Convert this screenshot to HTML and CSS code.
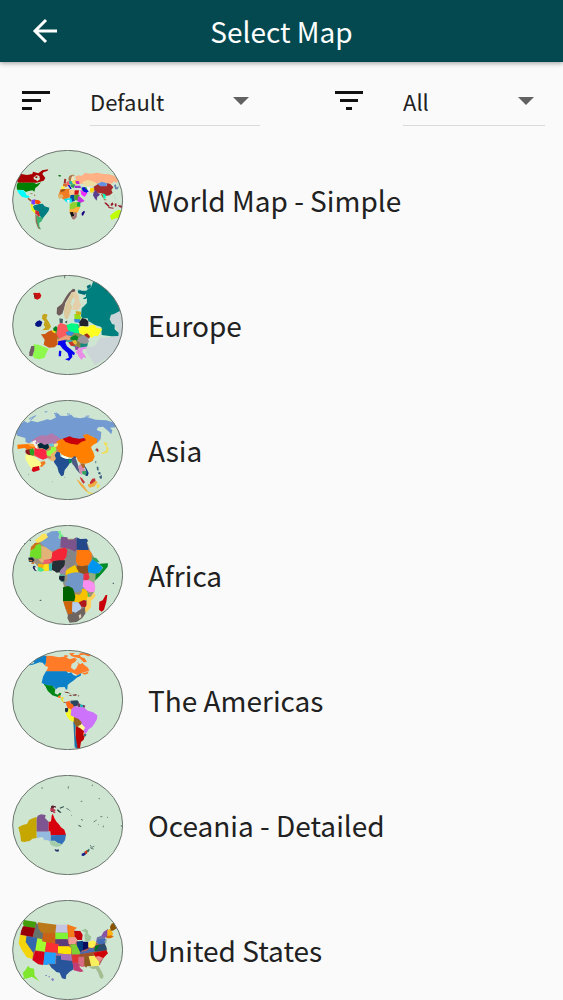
FILE: index.html
```html
<!DOCTYPE html>
<html lang="en">
<head>
    <meta charset="utf-8" />
    <meta name="viewport" content="width=device-width, initial-scale=1" />
    <title>Select Map</title>
    <link rel="stylesheet" href="styles.css">
</head>
<body>
    <header class="app-bar">
        <button class="back-button" type="button" aria-label="Back">
            <svg viewBox="0 0 28 28" width="28" height="28">
                <path d="M27 14H5M16 3L5 14L16 25" fill="none" stroke="currentColor" stroke-width="3" />
            </svg>
        </button>
        <h1 class="app-title">Select Map</h1>
    </header>
    <main>
        <form class="filters">
            <div class="filter">
                <label for="sort" aria-label="Sort">
                    <svg viewBox="0 0 28 20" width="28" height="20">
                        <path d="M0 0h28v3H0zM0 8h19v3H0zM0 16h10v3H0z" />
                    </svg>
                </label>
                <div class="select-box">
                    <select id="sort">
                        <option>Default</option>
                        <option>Name</option>
                    </select>
                </div>
            </div>
            <div class="filter">
                <label for="show" aria-label="Filter">
                    <svg viewBox="0 0 28 20" width="28" height="20">
                        <path d="M0 0h28v3H0zM5 8h18v3H5zM11 16h6v3h-6z" />
                    </svg>
                </label>
                <div class="select-box">
                    <select id="show">
                        <option>All</option>
                        <option>World</option>
                    </select>
                </div>
            </div>
        </form>
        <ul class="map-list">
            <li>
                <a href="#world">
                    <svg class="globe" viewBox="21 21 333 300">
                        <defs>
                            <clipPath id="globe-clip"><ellipse cx="188" cy="171" rx="165" ry="149" /></clipPath>
                        </defs>
                        <ellipse class="sea" cx="188" cy="171" rx="165" ry="149" />
                        <g clip-path="url(#globe-clip)">
                            <path fill="#a80000" d="M36 96L48 93L66 96L82 93L84 86L100 91L112 82L130 79L127 84L116 87L112 93L121 105L116 113L106 116L94 119L40 119L34 112Z" />
                            <path fill="#cee5d1" d="M86 103L95 96L103 99L105 109L97 115L92 110L86 109Z" />
                            <path fill="#a80000" d="M92 99L98 101L96 106L91 104Z" />
                            <path fill="#008000" d="M38 119L87 119L94 123L108 118L99 129L91 135L88 146L82 142L68 145L63 147L55 141L36 140L35 128Z" />
                            <path fill="#00ffff" d="M36 141L55 142L62 149L64 157L72 158L74 163L65 165L51 161L42 152Z" />
                            <path fill="#a0522d" d="M69 164L77 169L82 176L76 175L68 168ZM72 149L84 152L81 154ZM87 154L92 157L88 159Z" />
                            <path fill="#7a3cff" d="M80 171L91 169L90 184L79 187Z" />
                            <path fill="#ff4500" d="M90 170L102 172L108 178L102 184L91 182Z" />
                            <path fill="#e7f51c" d="M76 184L84 184L83 193L91 200L91 212L80 202Z" />
                            <path fill="#007f82" d="M88 187L103 183L113 182L119 190L133 194L131 203L124 213L117 221L111 230L106 220L101 213L100 205L88 200L84 191Z" />
                            <path fill="#d22b2b" d="M91 201L101 205L105 218L100 223L96 215L91 213Z" />
                            <path fill="#3cb371" d="M94 216L101 221L112 223L111 234L103 239L103 250L108 258L101 256L94 237Z" />
                            <path fill="#8f6d4b" d="M91 213L95 218L96 235L101 253L108 260L99 256L92 236Z" />
                            <path fill="#ffb084" d="M206 111L214 112L210 101L220 97L229 99L240 90L257 92L277 89L296 93L312 94L327 98L341 111L334 120L328 115L320 122L303 119L290 117L274 122L255 113L242 115L238 122L225 122L216 119Z" />
                            <path fill="#006400" d="M160 96L168 97L166 101L161 100Z" />
                            <path fill="#a97748" d="M190 107L193 99L201 95L210 96L200 105L197 115L192 114Z" />
                            <path fill="#ffe4b5" d="M200 103L205 96L207 109L202 114L198 112Z" />
                            <path fill="#a52a2a" d="M178 107L184 108L182 122L176 121Z" />
                            <path fill="#ff5f5f" d="M184 117L192 114L194 126L185 129Z" />
                            <path fill="#20b2aa" d="M192 115L202 114L204 123L193 123Z" />
                            <path fill="#f2e34c" d="M199 113L216 112L223 120L217 125L204 122Z" />
                            <path fill="#c020d0" d="M211 113L222 115L224 124L213 122Z" />
                            <path fill="#d87030" d="M174 122L186 122L185 132L174 131Z" />
                            <path fill="#fff04c" d="M168 130L180 130L178 139L169 138Z" />
                            <path fill="#0000cd" d="M188 126L194 127L200 137L196 138Z" />
                            <path fill="#30a050" d="M196 124L211 124L206 135L198 132Z" />
                            <path fill="#9932cc" d="M207 128L226 128L228 135L210 135Z" />
                            <path fill="#efdda0" d="M232 117L247 111L262 114L275 121L265 130L247 129L237 130Z" />
                            <path fill="#668fe0" d="M276 123L291 116L306 121L304 132L284 131Z" />
                            <path fill="#a52a2a" d="M266 131L278 124L286 130L305 130L307 120L317 124L325 133L319 141L323 149L314 157L301 159L290 151L276 149L268 143Z" />
                            <path fill="#30a050" d="M229 134L243 132L251 136L247 144L231 143Z" />
                            <path fill="#0d0ddc" d="M230 134L238 132L243 139L252 144L244 150L235 146Z" />
                            <path fill="#f4f4f4" d="M244 132L257 133L256 141L249 143Z" />
                            <path fill="#eb30ff" d="M226 140L237 147L247 151L239 162L229 155Z" />
                            <path fill="#ffd400" d="M255 136L268 135L265 148L256 149Z" />
                            <path fill="#5c4090" d="M266 147L273 142L277 149L285 153L282 158L277 161L275 173L269 166L264 157Z" />
                            <path fill="#ef7c22" d="M166 139L193 137L200 147L195 162L178 171L160 158Z" />
                            <path fill="#e1b26b" d="M159 155L171 153L176 162L164 168L160 163Z" />
                            <path fill="#8d4d1f" d="M168 140L181 138L178 144L167 147Z" />
                            <path fill="#ffca8b" d="M192 141L208 141L208 157L194 158Z" />
                            <path fill="#d01010" d="M209 142L222 142L220 155L208 155Z" />
                            <path fill="#0050a0" d="M197 156L207 155L210 173L199 178L194 167Z" />
                            <path fill="#4f9b2c" d="M207 156L224 155L220 173L209 171Z" />
                            <path fill="#00e5f2" d="M177 167L199 166L202 178L188 179L180 174Z" />
                            <path fill="#f4f4f4" d="M186 171L194 170L193 180L187 178Z" />
                            <path fill="#c92ee5" d="M220 160L227 163L239 174L226 180L217 174Z" />
                            <path fill="#8fd12e" d="M194 183L203 178L219 177L224 188L214 201L194 199Z" />
                            <path fill="#00ac4b" d="M217 178L226 177L226 191L216 191Z" />
                            <path fill="#ffb13b" d="M193 199L205 198L216 191L226 192L217 210L202 213L194 209Z" />
                            <path fill="#111" d="M194 208L204 207L208 218L200 223Z" />
                            <path fill="#a47773" d="M206 207L216 209L215 223L207 230L201 227L200 221L208 218Z" />
                            <path fill="#17007d" d="M230 210L237 203L240 206L234 218L230 217Z" />
                            <path fill="#00ffc0" d="M293 151L302 155L302 166L296 168Z" />
                            <path fill="#9b5b25" d="M286 151L294 156L296 168L307 171L298 172Z" />
                            <path fill="#9b1c2a" d="M298 178L304 179L315 190L310 191L300 182ZM317 182L324 178L325 186L318 189ZM310 192L326 194L325 197L310 195ZM329 182L334 181L335 190L330 191ZM338 186L352 188L354 197L342 191Z" />
                            <path fill="#607fb0" d="M325 153L330 164L335 173M327 127L332 124L335 134L342 129L338 139L331 139Z" />
                            <path fill="#bfff00" d="M315 218L324 210L333 204L341 200L348 202L354 213L350 229L334 225L319 231Z" />
                        </g>
                        <ellipse class="rim" cx="188" cy="171" rx="165" ry="149" />
                    </svg>
                    <span>World Map - Simple</span>
                </a>
            </li>
            <li>
                <a href="#europe">
                    <svg class="globe" viewBox="21 21 333 300">
                        <ellipse class="sea" cx="188" cy="171" rx="165" ry="149" />
                        <g clip-path="url(#globe-clip)">
                            <path fill="#cbd5d8" d="M318 139L337 130L358 133V240L270 291L245 252L242 239L269 234L285 211L320 206L340 193L328 170L313 160Z" />
                            <path fill="#007f7f" d="M219 64L230 68L244 68L249 63L258 58L265 39L285 43L360 80V130L343 130L327 138L318 140L314 154L321 168L329 170L329 184L341 195L340 204L319 205L290 201L289 177L270 171L250 159L248 151L233 151L228 145L230 121L238 113L246 105L245 93L230 93L235 86L244 80L232 75Z" />
                            <path fill="#cee5d1" d="M219 73L234 81L241 78L243 86L234 91L239 95L245 90L246 97L238 103L228 105L224 91Z" />
                            <path fill="#006b75" d="M218 67L231 69L243 73L239 81L220 76ZM245 54L256 49L258 57L248 63Z" />
                            <path fill="#705b5b" d="M156 119L171 107L181 89L190 76L204 62L210 64L211 71L200 73L191 88L181 104L178 119L172 137L162 143L155 137Z" />
                            <path fill="#dcc99e" d="M177 123L183 104L193 86L202 73L211 72L211 83L201 94L197 108L202 117L195 136L188 153L181 153L177 140Z" />
                            <path fill="#e5cfaa" d="M202 75L211 69L221 83L223 100L229 111L220 126L203 126L204 108L210 99Z" />
                            <path fill="#cf1010" d="M84 77L88 74L95 75L104 74L109 82L106 90L97 95L87 91L90 86Z" />
                            <path fill="#93201f" d="M87 78L96 83L93 91L87 88ZM158 22L163 21L161 25Z" />
                            <path fill="#c5a31a" d="M112 141L119 137L128 140L124 151L133 164L138 176L131 185L112 187L121 178L116 171L119 160L111 152Z" />
                            <path fill="#061585" d="M91 166L96 160L104 157L112 162L108 175L99 177L91 173Z" />
                            <path fill="#8a8f56" d="M160 172L186 170L224 170L224 197L248 204L245 226L222 240L212 240L192 220L160 222L152 195Z" />
                            <path fill="#cb5913" d="M108 199L120 198L129 191L139 187L149 194L160 201L157 211L158 229L149 238L132 239L116 230L119 215Z" />
                            <path fill="#8df94c" d="M85 229L100 230L124 239L131 242L124 255L119 269L103 274L89 271L83 264L88 245Z" />
                            <path fill="#705b62" d="M79 234L88 234L88 246L82 265L73 264L73 253Z" />
                            <path fill="#008020" d="M145 180L153 174L158 180L153 194L145 190Z" />
                            <path fill="#ffe200" d="M142 187L152 190L151 195L142 192Z" />
                            <path fill="#fa5b5e" d="M158 173L166 164L180 169L190 181L187 203L179 212L163 212L155 199Z" />
                            <path fill="#48626b" d="M163 151L174 153L173 165L164 165ZM181 160L187 158L186 166L181 165Z" />
                            <path fill="#00fb85" d="M185 172L198 166L219 168L222 181L222 196L210 195L197 192L188 184Z" />
                            <path fill="#338ddf" d="M182 193L193 189L208 194L200 203L186 202ZM207 152L225 151L227 165L209 163Z" />
                            <path fill="#99dd11" d="M208 138L223 137L230 151L224 154L209 153Z" />
                            <path fill="#cfae19" d="M212 129L228 131L228 140L214 140Z" />
                            <path fill="#20232b" d="M223 163L231 150L242 153L250 160L250 174L239 176L224 173Z" />
                            <path fill="#ffff22" d="M220 181L233 174L249 177L258 171L270 172L275 180L292 182L285 195L278 205L268 203L260 210L248 203L236 202L223 195Z" />
                            <path fill="#eaa17d" d="M156 216L183 202L199 205L193 217L181 214L168 223Z" />
                            <path fill="#0606ef" d="M160 220L175 217L185 217L181 224L186 235L199 245L210 255L207 262L201 259L202 267L192 278L180 274L192 269L188 255L173 242L165 232L158 231ZM162 248L169 249L168 265L161 265Z" />
                            <path fill="#078727" d="M195 209L211 201L220 207L217 218L201 218Z" />
                            <path fill="#2dacae" d="M180 218L200 216L207 219L201 223L213 239L202 234L191 223Z" />
                            <path fill="#c6382b" d="M190 223L205 220L210 234L198 234Z" />
                            <path fill="#e9bd33" d="M201 218L213 216L217 230L207 228Z" />
                            <path fill="#99979c" d="M222 208L233 202L247 205L252 222L241 228L225 225L217 218Z" />
                            <path fill="#a82d1b" d="M237 200L246 196L255 205L252 212L242 205Z" />
                            <path fill="#8e7d3c" d="M218 219L226 225L223 237L213 232Z" />
                            <path fill="#16897d" d="M226 226L240 228L249 225L246 237L226 239Z" />
                            <path fill="#9446a8" d="M210 235L223 238L218 245L211 247Z" />
                            <path fill="#e88ee6" d="M212 253L222 241L236 237L245 235L243 243L233 244L232 253L239 260L244 271L235 268L230 276L221 266L218 258Z" />
                        </g>
                        <ellipse class="rim" cx="188" cy="171" rx="165" ry="149" />
                        <path d="M179 22V31M300 70l5-2" fill="none" stroke="#444" stroke-width="2" />
                    </svg>
                    <span>Europe</span>
                </a>
            </li>
            <li>
                <a href="#asia">
                    <svg class="globe" viewBox="21 21 333 300">
                        <ellipse class="sea" cx="188" cy="171" rx="165" ry="149" />
                        <g clip-path="url(#globe-clip)">
                            <path fill="#739bd2" d="M34 104L58 84L68 90L79 83L97 88L118 82L126 79L137 81L145 77L153 73L149 65L158 60L166 68L182 69L199 65L206 73L226 76L245 72L272 80L304 82L330 90L337 102L315 104L322 112L319 124L307 112L294 101L279 103L275 111L289 117L287 138L276 151L268 144L263 130L241 138L218 140L193 138L169 143L153 131L137 127L111 131L93 134L84 143L73 151L62 148L61 135L37 128L31 116Z" />
                            <path d="M72 78L92 68L86 74L76 82M147 62L156 60M186 62L195 64M242 70L253 69M119 57L127 56" fill="none" stroke="#739bd2" stroke-width="3" />
                            <path fill="#c98a62" d="M102 156L160 142L165 190L150 204L128 196L100 192L64 186L62 158Z" />
                            <path fill="#b279ad" d="M80 143L95 132L111 127L125 128L139 121L154 129L169 140L160 151L145 153L132 153L122 155L109 155L98 148L95 154L87 151Z" />
                            <path fill="#f6f6ed" d="M83 145L92 141L94 147L90 149L97 159L98 168L91 170L89 158L83 153Z" />
                            <path fill="#002a3c" d="M98 154L108 149L118 156L130 152L132 164L124 171L111 165L102 166Z" />
                            <path fill="#ff7f00" d="M163 141L173 137L185 147L207 151L228 147L240 139L234 125L248 124L266 133L277 139L276 149L264 156L258 162L261 170L265 177L269 191L263 204L250 210L240 212L227 211L219 204L215 193L199 194L185 192L169 184L159 172L155 163L159 154L153 147Z" />
                            <path fill="#c90008" d="M173 137L194 130L204 134L223 137L238 135L243 142L229 147L218 155L197 152L182 147Z" />
                            <path fill="#ff7900" d="M37 155L54 154L83 153L94 167L79 165L71 170L58 165L38 168Z" />
                            <path fill="#ffa642" d="M66 151L87 154L88 162L75 160Z" />
                            <path fill="#8e1822" d="M62 171L74 169L79 184L72 189L61 178Z" />
                            <path fill="#2ca320" d="M73 170L84 166L89 179L84 189L75 184Z" />
                            <path fill="#ff2743" d="M91 164L99 169L115 168L124 174L127 195L114 200L100 194L88 185L88 174Z" />
                            <path fill="#f9fb8b" d="M62 183L75 187L87 190L99 201L111 210L104 221L89 224L80 229L71 215L61 197Z" />
                            <path fill="#d70513" d="M83 223L102 219L104 231L86 237L80 233Z" />
                            <path fill="#ef7b23" d="M106 207L119 204L122 211L111 222L104 220L109 215Z" />
                            <path fill="#95ff44" d="M125 175L137 171L139 161L152 161L154 171L146 184L136 190L125 187Z" />
                            <path fill="#eeb36b" d="M136 185L149 174L157 176L157 190L150 205L133 202L139 192Z" />
                            <path fill="#66c9db" d="M129 153L143 151L150 158L138 161Z" />
                            <path fill="#f1e894" d="M146 153L160 150L157 160L148 163Z" />
                            <path fill="#224f91" d="M155 176L164 178L167 191L182 197L199 198L208 190L214 192L208 202L197 206L189 219L179 231L176 247L169 250L161 238L157 222L146 206L153 197L149 187Z" />
                            <path fill="#fafff0" d="M170 187L191 193L189 198L174 194Z" />
                            <path fill="#008d52" d="M191 198L201 201L199 211L191 209Z" />
                            <path fill="#4e5b82" d="M200 200L207 190L214 200L218 213L222 230L226 243L215 231L207 218L202 213Z" />
                            <path fill="#d38aac" d="M219 220L227 214L237 224L241 235L231 235L230 246L225 241L223 231Z" />
                            <path fill="#b26422" d="M226 211L239 212L240 224L233 225Z" />
                            <path fill="#36a05e" d="M231 235L241 233L248 238L242 247L232 243Z" />
                            <path fill="#103f82" d="M238 217L244 226L251 240L248 249L241 248L245 240Z" />
                            <path fill="#c52f38" d="M224 251L231 256L240 268L235 272L228 262ZM255 267L262 257L270 256L272 265L263 274L255 274Z" />
                            <path fill="#efad42" d="M214 258L222 263L237 278L245 290L252 296L243 295L227 278ZM249 274L260 272L272 263L278 267L269 280L254 284L249 279Z" />
                            <path fill="#efde59" d="M279 272L286 276L282 282L277 288L274 279ZM245 296L262 299L270 303L251 302ZM295 146L308 151L304 162L299 155ZM305 159L311 165L309 178L294 183L287 181L303 173Z" />
                            <path fill="#60c1bd" d="M270 168L277 169L274 174L270 173Z" />
                            <path fill="#a92a2a" d="M275 164L281 171L279 178L273 172Z" />
                            <path fill="#3c617d" d="M275 221L280 221L281 233L276 231ZM281 237L286 237L287 245L279 242ZM282 251L290 246L291 256L287 258ZM270 205L274 205L273 213Z" />
                        </g>
                        <path d="M69 245h3M141 266h2M178 253l3 1" fill="none" stroke="#679090" stroke-width="2" />
                        <ellipse class="rim" cx="188" cy="171" rx="165" ry="149" />
                    </svg>
                    <span>Asia</span>
                </a>
            </li>
            <li>
                <a href="#africa">
                    <svg class="globe" viewBox="21 21 333 300">
                        <ellipse class="sea" cx="188" cy="171" rx="165" ry="149" />
                        <g clip-path="url(#globe-clip)">
                            <path fill="#9c8f7c" d="M80 98L105 70L165 62L215 62L246 72L256 100L282 142L292 152L268 188L268 220L256 240L243 280L215 308L194 310L178 262L178 208L164 164L142 156L112 158L84 130Z" />
                            <path fill="#769ed1" d="M105 73L127 58L125 47L140 40L158 39L163 47L160 60L168 66L166 88L151 97L136 98L123 90Z" />
                            <path fill="#78ed8c" d="M158 39L168 39L169 48L177 54L169 65L162 59L163 48Z" />
                            <path fill="#ffe359" d="M90 66L103 57L112 47L123 48L129 57L113 69L97 76Z" />
                            <path fill="#c97419" d="M83 82L90 74L104 74L101 81L94 84L89 92L76 98L78 86Z" />
                            <path fill="#70de28" d="M76 99L89 91L93 82L103 77L110 86L109 121L92 122L84 117L74 118Z" />
                            <path fill="#e3b276" d="M109 83L123 88L143 103L139 123L122 127L116 135L108 133L100 124L109 120Z" />
                            <path fill="#7c548b" d="M168 56L187 58L189 66L204 65L213 58L216 92L211 102L195 94L181 91L166 88Z" />
                            <path fill="#24498b" d="M214 58L226 63L245 62L250 70L245 72L251 97L215 95Z" />
                            <path fill="#ff780b" d="M216 96L252 96L260 106L260 123L248 142L234 145L219 142L211 127L210 114L215 111Z" />
                            <path fill="#858587" d="M182 91L195 95L212 102L214 114L211 137L192 152L182 149L180 128L184 119Z" />
                            <path fill="#f52538" d="M142 103L160 93L180 89L187 95L184 117L172 131L159 129L147 128L140 133L131 137L126 128L140 121Z" />
                            <path fill="#eb616a" d="M117 126L133 123L140 131L127 139L113 138Z" />
                            <path fill="#252e36" d="M143 130L162 127L180 127L179 143L168 154L166 162L155 164L147 158L139 155Z" />
                            <path fill="#3ab8b2" d="M132 138L141 136L141 158L133 158Z" />
                            <path fill="#fae21d" d="M116 139L131 137L132 158L116 160L110 156Z" />
                            <path fill="#ffb100" d="M99 137L112 138L117 148L100 151Z" />
                            <path fill="#4ae48e" d="M98 147L110 149L119 157L108 161L98 158Z" />
                            <path fill="#14252e" d="M70 119L82 118L88 126L84 132L72 131Z" />
                            <path fill="#c66e3e" d="M72 125L83 126L81 130L73 129ZM80 133L88 132L87 138L79 138Z" />
                            <path fill="#20295b" d="M85 143L91 144L92 151L97 160L89 158L83 149Z" />
                            <path fill="#e9f2e9" d="M88 146L95 151L98 157L93 158Z" />
                            <path fill="#9f80af" d="M166 157L176 149L180 139L184 151L182 167L170 168L164 163Z" />
                            <path fill="#f5c900" d="M182 159L193 150L209 142L218 149L222 164L205 165L192 171L182 170Z" />
                            <path fill="#8a521e" d="M216 142L231 145L248 142L250 156L251 168L237 169L222 163L214 149Z" />
                            <path fill="#0095ee" d="M248 147L258 131L265 121L274 131L286 140L293 150L281 166L263 168L250 163Z" />
                            <path fill="#30a25a" d="M260 118L274 120L284 133L275 133L263 124Z" />
                            <path fill="#008c29" d="M283 137L309 136L308 146L295 162L279 179L269 189L270 168L283 165L294 149Z" />
                            <path fill="#92ad80" d="M249 171L256 164L272 168L271 187L264 192L252 187Z" />
                            <path fill="#e73142" d="M234 168L249 164L254 179L247 187L233 187Z" />
                            <path fill="#5ba99a" d="M163 171L170 167L180 171L178 193L168 191L162 183Z" />
                            <path fill="#1e2639" d="M163 174L179 174L178 190L170 190L162 183Z" />
                            <path fill="#7197c9" d="M187 169L202 164L218 163L236 169L235 186L235 205L231 217L219 222L207 222L203 210L188 206L178 197L187 187Z" />
                            <path fill="#fa8ef0" d="M235 187L253 187L265 193L271 207L268 221L254 223L242 215L233 205Z" />
                            <path fill="#f8c200" d="M207 229L224 230L231 221L230 213L241 214L249 225L248 246L236 247L222 254L207 251Z" />
                            <path fill="#49cb52" d="M247 222L254 232L253 245L249 237Z" />
                            <path fill="#006200" d="M174 208L190 204L203 211L207 220L211 236L208 249L174 250Z" />
                            <path fill="#cd640b" d="M174 250L203 250L204 256L202 267L202 288L191 291L184 277L178 260Z" />
                            <path fill="#b5ceed" d="M202 252L218 253L230 265L226 278L211 285L201 281Z" />
                            <path fill="#6e6561" d="M190 289L202 287L203 280L211 285L224 276L239 267L242 285L232 300L215 312L194 314L187 300Z" />
                            <path fill="#ae171c" d="M222 253L236 246L244 249L245 268L229 266Z" />
                            <path fill="#ffd05a" d="M246 237L257 236L268 223L272 235L258 249L258 267L249 278L241 284L240 269L245 261Z" />
                            <path fill="#e0d1bc" d="M221 292L228 288L229 298L223 302Z" />
                            <path fill="#c90009" d="M302 231L307 231L304 251L297 275L290 281L282 275L283 251L293 247Z" />
                        </g>
                        <path d="M104 247h5M323 196h4M74 67h4M58 77h2" fill="none" stroke="#36575b" stroke-width="3" />
                        <ellipse class="rim" cx="188" cy="171" rx="165" ry="149" />
                    </svg>
                    <span>Africa</span>
                </a>
            </li>
            <li>
                <a href="#americas">
                    <svg class="globe" viewBox="21 21 333 300">
                        <ellipse class="sea" cx="188" cy="171" rx="165" ry="149" />
                        <g clip-path="url(#globe-clip)">
                            <path fill="#0c80c8" d="M72 65L88 60L84 52L98 45L97 38L124 38L140 44L122 60L121 68L113 59L104 58L83 65L65 68Z" />
                            <path fill="#ff7b27" d="M142 39L161 43L179 41L195 49L208 44L216 49L210 57L200 63L198 74L208 81L214 76L220 64L217 57L229 56L237 65L249 74L253 84L239 87L229 91L217 96L205 90L193 87L170 86L123 86L130 72L120 69L123 59L124 38Z" />
                            <path fill="#ff7b27" d="M192 31L209 30L203 36L224 35L228 42L239 46L246 57L236 58L224 46L207 42L199 39ZM224 31L247 30L258 39L249 40L239 35L222 37ZM180 36L190 38L184 44L176 40ZM231 91L248 87L251 91L239 95Z" />
                            <path fill="#cee5d1" d="M204 62L210 58L215 63L211 72L203 76L199 71ZM221 52L233 58L227 64L219 60Z" />
                            <path fill="#0c80c8" d="M123 85L183 85L191 91L198 88L205 96L213 99L229 91L227 98L215 104L207 112L194 121L188 126L187 139L183 140L179 132L161 133L153 139L144 130L121 126L110 119L114 101Z" />
                            <path fill="#008617" d="M116 121L123 126L142 128L151 139L149 151L158 155L164 149L169 151L166 158L158 162L142 157L129 145L122 135Z" />
                            <path d="M119 128L126 143" fill="none" stroke="#cee5d1" stroke-width="3" />
                            <path fill="#ff721c" d="M159 159L165 157L168 164L160 165Z" />
                            <path fill="#dfdf3e" d="M167 163L176 162L174 174L180 177L175 179L168 171Z" />
                            <path fill="#793b36" d="M177 146L188 147L199 153L191 151L182 149ZM174 177L184 178L181 181ZM190 157L199 155L200 160ZM202 155L215 153L214 158L205 158ZM218 156L223 158L221 161Z" />
                            <path fill="#ff671b" d="M183 177L193 173L197 181L208 184L209 195L198 202L189 196L184 187Z" />
                            <path fill="#2a455f" d="M196 173L217 172L222 178L217 189L207 191L203 184L197 181Z" />
                            <path fill="#6a3e58" d="M218 179L227 183L224 194L218 191ZM234 185L241 188L238 195L233 193Z" />
                            <path fill="#00abb2" d="M226 184L234 186L232 194L226 193Z" />
                            <path fill="#1e2d43" d="M180 196L188 194L191 201L186 210L180 205Z" />
                            <path fill="#f3f72c" d="M181 210L188 207L191 196L203 202L200 212L212 221L207 238L194 231L186 221Z" />
                            <path fill="#cd72fa" d="M199 199L208 190L223 192L238 194L248 203L264 208L277 217L276 228L268 242L261 252L251 259L241 274L235 265L239 252L231 246L226 235L212 224L197 217Z" />
                            <path fill="#956220" d="M207 222L221 228L230 238L227 248L215 253L206 241Z" />
                            <path fill="#ffff8c" d="M220 249L231 244L240 255L235 262L226 257Z" />
                            <path fill="#bd0000" d="M212 250L225 255L237 265L235 274L239 280L236 290L228 297L225 315L216 317L211 287Z" />
                            <path fill="#1d74a9" d="M205 234L212 250L210 273L214 292L218 317L209 313L207 274Z" />
                            <path fill="#ff6230" d="M235 269L242 274L241 281L234 277Z" />
                            <path fill="#267d8a" d="M237 273L245 274L242 280L236 280Z" />
                        </g>
                        <ellipse class="rim" cx="188" cy="171" rx="165" ry="149" />
                    </svg>
                    <span>The Americas</span>
                </a>
            </li>
            <li>
                <a href="#oceania">
                    <svg class="globe" viewBox="21 21 333 300">
                        <ellipse class="sea" cx="188" cy="171" rx="165" ry="149" />
                        <g clip-path="url(#globe-clip)">
                            <path fill="#c6a600" d="M40 178L53 171L66 168L72 156L85 150L95 147V210L82 212L74 219L57 222L48 220L46 202Z" />
                            <path fill="#7d5590" d="M95 153L98 143L108 139L122 141L120 150L131 161V191H95Z" />
                            <path fill="#94badf" d="M95 191H136V222L128 216L119 217L112 207L96 210Z" />
                            <path fill="#d8000c" d="M131 162L138 160L140 143L143 137L149 152L155 162L161 168L168 178L178 185L183 201L137 202L136 190H131Z" />
                            <path fill="#3270ba" d="M137 202L183 200L180 217L171 229L159 225L149 218H137Z" />
                            <path fill="#a3cca9" d="M135 219L148 220L159 226L172 229L167 234L154 237L142 233L135 228Z" />
                            <path fill="#23376c" d="M149 243L154 245L161 244L162 250L156 251L150 248Z" />
                            <path fill="#101014" d="M138 118H146V131H138Z" />
                            <path fill="#b43b51" d="M136 120L148 120L152 127L148 132L153 134L147 136L141 130L136 129Z" />
                            <path fill="#ece9e5" d="M146 119L153 118L151 124L146 124Z" />
                            <path fill="#5d2432" d="M138 115L144 112L147 114L152 114L153 119L147 118L146 121L138 121Z" />
                            <path fill="#a31f2f" d="M158 126L167 133L162 132Z" />
                            <path fill="#2b4c49" d="M164 119L177 114L176 118L165 122ZM156 124L161 125L170 134L164 134L157 128ZM219 170L228 174L229 177L222 175Z" />
                            <path fill="#142391" d="M230 257L237 254L243 250L244 258L236 264L230 263Z" />
                            <path fill="#c73a1b" d="M238 251L246 246L250 248L245 258L240 257Z" />
                            <path fill="#2a6868" d="M247 246L252 242L254 246L250 253L246 251Z" />
                        </g>
                        <path d="M255 231l4 5l-3 5M260 239l8-5M258 241l8 2M109 60h5M190 55v7M262 50v4M227 100h5M281 92h4M184 121l8 4M193 127l3 2M228 154l6 3M266 162l6-4l3-2M286 146h6M306 148h3M295 173v5M280 170h2M349 171v5M198 142h2" fill="none" stroke="#64837b" stroke-width="3" />
                        <ellipse class="rim" cx="188" cy="171" rx="165" ry="149" />
                    </svg>
                    <span>Oceania - Detailed</span>
                </a>
            </li>
            <li>
                <a href="#united-states">
                    <svg class="globe" viewBox="21 21 333 300">
                        <ellipse class="sea" cx="188" cy="171" rx="165" ry="149" />
                        <g clip-path="url(#globe-clip)">
                            <path fill="#b0605a" d="M60 90L98 92L190 100L210 140L232 150L270 150L296 140L304 164L304 180L284 216L222 220L206 226L170 220L100 210L62 180L50 130Z" />
                            <path fill="#449d0b" d="M57 81L94 87L90 105L56 100L54 91Z" />
                            <path fill="#970008" d="M54 100L90 105L83 132L46 125L49 112Z" />
                            <path fill="#66736d" d="M93 90L100 95L101 105L108 116L115 120L112 138L83 133L90 108Z" />
                            <path fill="#ba781b" d="M98 88L154 95L152 124L114 121L107 116L101 106Z" />
                            <path fill="#ca6114" d="M114 121H152V152L113 148Z" />
                            <path fill="#f4d50b" d="M45 125L65 129L63 146L85 181L82 198L65 193L50 170L41 151Z" />
                            <path fill="#3367ad" d="M65 129L97 135L91 172L84 178L62 147Z" />
                            <path fill="#a2ff2f" d="M97 136L112 139L111 145L124 148L120 176L91 172Z" />
                            <path fill="#fb3033" d="M124 148L161 153L157 178L120 176Z" />
                            <path fill="#d6001b" d="M91 174L119 177L115 216L100 214L82 201L86 189Z" />
                            <path fill="#24a0fc" d="M119 177L153 180L151 213L131 212L126 216L115 215Z" />
                            <path fill="#c5c4e3" d="M154 95H187L189 119H151Z" />
                            <path fill="#80f334" d="M151 119H189V139H151Z" />
                            <path fill="#5e3c79" d="M151 139H187L193 160H161V152H151Z" />
                            <path fill="#ffe300" d="M159 160H192L199 166L198 185L159 181Z" />
                            <path fill="#aa70b5" d="M153 182L198 184L202 203L188 204L168 200V188L154 187Z" />
                            <path fill="#28549b" d="M154 188H168V200L202 204L206 229L194 236L184 246L182 259L171 256L164 239L154 237L147 230L140 225L132 214L153 213Z" />
                            <path fill="#f47b18" d="M187 94L198 98L216 104L207 112L207 122L212 132H190L188 115Z" />
                            <path fill="#f09b93" d="M190 133L210 132L216 143L211 153H191Z" />
                            <path fill="#7bd035" d="M194 155L211 153L217 160L226 178L224 184H200V166Z" />
                            <path fill="#c20008" d="M207 113L226 114L233 125L231 141H217L209 130Z" />
                            <path fill="#003e84" d="M215 146L233 143L235 148L234 171L226 178L217 160Z" />
                            <path fill="#070e60" d="M234 146H250V166L234 172Z" />
                            <path fill="#9dc49b" d="M229 112L242 107L249 113L249 122L259 132L255 144L240 143L238 127L242 119Z" />
                            <path fill="#fff04f" d="M250 148L264 142L273 147L271 158L262 165L250 163Z" />
                            <path fill="#6d75a9" d="M276 133L298 126L301 139L298 153L278 153L273 147Z" />
                            <path fill="#416cba" d="M277 140L302 137V151L279 154Z" />
                            <path fill="#007225" d="M271 158L285 154L284 163L276 175L266 174Z" />
                            <path fill="#2b4c6a" d="M284 155L298 151L304 162L306 172L270 176L278 166Z" />
                            <path fill="#4a69af" d="M227 177L246 173L254 165L267 166L269 176L250 180L224 184Z" />
                            <path fill="#a15226" d="M225 184L267 177L265 188L222 191Z" />
                            <path fill="#d00008" d="M266 179L304 172L309 181L295 195L283 191L270 192Z" />
                            <path fill="#df3034" d="M201 186L224 185L220 209H203Z" />
                            <path fill="#d86982" d="M220 192L238 192V221L229 222L220 211Z" />
                            <path fill="#c23d73" d="M203 209H219L225 224L236 235L226 237L206 232Z" />
                            <path fill="#8f5b1c" d="M238 190L251 190L259 219L246 220L244 224L238 219Z" />
                            <path fill="#f7f05c" d="M251 190L269 188L283 207L282 219L259 221Z" />
                            <path fill="#ee8b89" d="M270 192L281 189L294 195L284 207Z" />
                            <path fill="#a4bd91" d="M250 221L280 218L287 230L296 249L292 258L285 255L280 240L272 227L262 228Z" />
                            <path fill="#8752a6" d="M289 129L296 116L309 108L314 128L304 134Z" />
                            <path fill="#ffb30a" d="M307 112L315 108L325 122L317 130L307 130Z" />
                            <path fill="#d86a00" d="M305 129L321 127L326 131L316 136L305 136Z" />
                            <path fill="#8a5400" d="M315 101L320 92L329 88L332 101L337 104L324 113L317 113Z" />
                            <path fill="#8ea996" d="M298 145L306 138L303 153Z" />
                            <path fill="#7fe72b" d="M53 240L63 229L69 218L75 225L87 227L89 248L95 255L103 265L92 258L80 251L69 256L59 257L48 261L57 252Z" />
                            <path fill="#8a84c3" d="M121 246h5v3h-5zM130 250h5v3h-5zM138 258l6-3l4 5l-6 5Z" />
                        </g>
                        <ellipse class="rim" cx="188" cy="171" rx="165" ry="149" />
                    </svg>
                    <span>United States</span>
                </a>
            </li>
        </ul>
    </main>
</body>
</html>
```
FILE: styles.css
```css
body {
    background-color: #fafafa;
    color: #212121;
    font-family: "Noto Sans CJK SC", "Noto Sans", sans-serif;
    margin: 0;
}

.app-bar {
    display: grid;
    grid-template-columns: 56px 1fr 56px;
    align-items: center;
    height: 62px;
    padding: 0 16px;
    box-sizing: border-box;
    background-color: #03494f;
    color: white;
    box-shadow: 0 1px 5px rgba(0, 0, 0, 0.4);
}

.back-button {
    width: 56px;
    height: 56px;
    padding: 0;
    border: none;
    background-color: transparent;
    color: inherit;
}

.back-button svg {
    display: block;
    margin: 0 auto;
}

.app-title {
    margin: 0;
    font-size: 28px;
    font-weight: normal;
    line-height: 40px;
    text-align: center;
}

.filters {
    display: grid;
    grid-template-columns: 17fr 15fr;
    gap: 75px;
    padding: 14px 18px 24px 22px;
}

.filter {
    display: flex;
    align-items: center;
    gap: 40px;
}

.filter svg {
    display: block;
    fill: #111;
}

.select-box {
    position: relative;
    flex: 1;
    min-width: 0;
    border-bottom: 1px solid #dadada;
}

.select-box::after {
    content: "";
    position: absolute;
    top: 21px;
    right: 11px;
    border-left: 8px solid transparent;
    border-right: 8px solid transparent;
    border-top: 8px solid #616161;
    pointer-events: none;
}

.select-box select {
    display: block;
    appearance: none;
    width: 100%;
    height: 49px;
    padding: 0;
    border: none;
    background-color: transparent;
    color: inherit;
    font-family: inherit;
    font-size: 22px;
}

.map-list {
    display: grid;
    gap: 25px;
    list-style-type: none;
    margin: 0;
    padding: 0 12px;
}

.map-list a {
    display: flex;
    align-items: center;
    gap: 25px;
    color: inherit;
    font-size: 28px;
    line-height: 40px;
    text-decoration: none;
}

.globe {
    flex: none;
    width: 111px;
    height: 100px;
}

.sea {
    fill: #cee5d1;
}

.rim {
    fill: none;
    stroke: #6c756e;
    stroke-width: 3px;
}
```
